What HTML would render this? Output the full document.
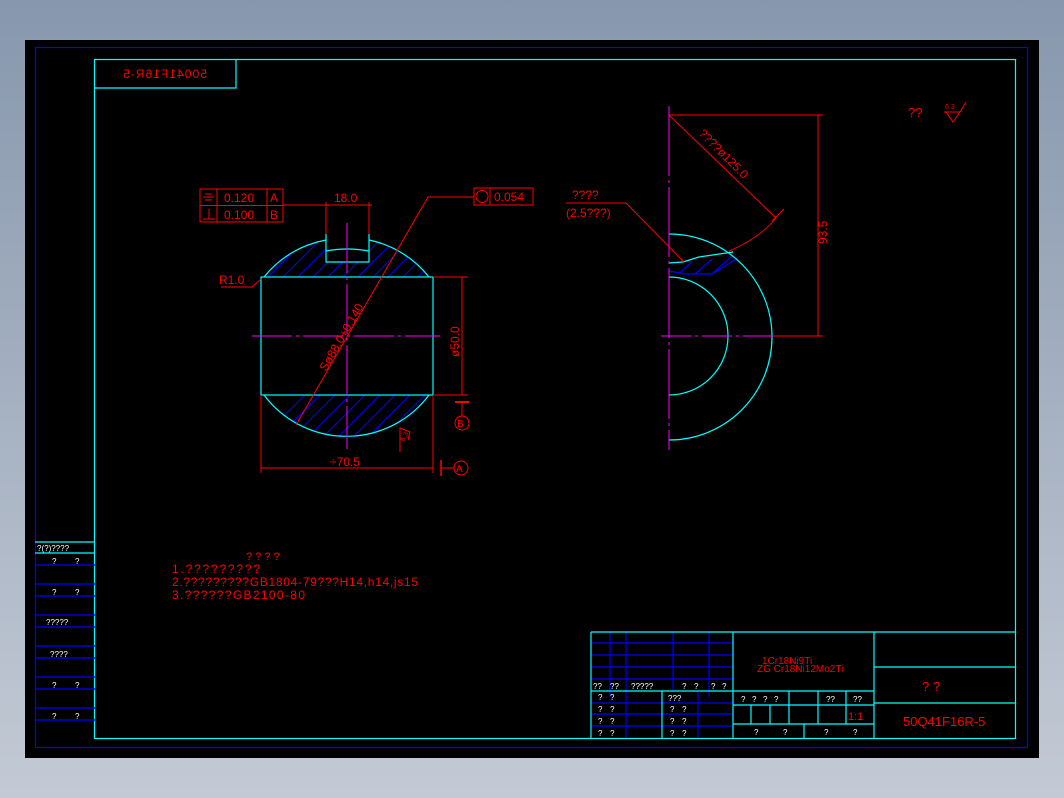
<!DOCTYPE html>
<html><head><meta charset="utf-8"><style>
html,body{margin:0;padding:0;}
body{width:1064px;height:798px;background:linear-gradient(#8797ad,#c3cad5);overflow:hidden;}
svg{display:block;}
text{font-family:"Liberation Sans",sans-serif;}
</style></head><body>
<svg width="1064" height="798" viewBox="0 0 1064 798" xmlns="http://www.w3.org/2000/svg">
<rect x="25" y="40" width="1014" height="718" fill="#000"/>
<g fill="none" stroke-width="1.2">
<rect x="35.5" y="47.5" width="992" height="700" stroke="#0000ff"/>
<rect x="94.5" y="59.5" width="921" height="679" stroke="#00ffff"/>
<polyline points="95,88 236,88 236,60" stroke="#00ffff"/>
<line x1="35" y1="542" x2="95" y2="542" stroke="#00ffff"/>
<line x1="35" y1="553" x2="95" y2="553" stroke="#00ffff"/>
<g stroke="#0000ff">
<line x1="35" y1="565" x2="95" y2="565"/><line x1="35" y1="584" x2="95" y2="584"/>
<line x1="35" y1="596" x2="95" y2="596"/><line x1="35" y1="615" x2="95" y2="615"/>
<line x1="35" y1="627" x2="95" y2="627"/><line x1="35" y1="646" x2="95" y2="646"/>
<line x1="35" y1="658" x2="95" y2="658"/><line x1="35" y1="677" x2="95" y2="677"/>
<line x1="35" y1="689" x2="95" y2="689"/><line x1="35" y1="708" x2="95" y2="708"/>
<line x1="35" y1="720" x2="95" y2="720"/>
</g>
<g stroke="#0000ff">
<line x1="610" y1="632" x2="610" y2="697"/><line x1="626" y1="632" x2="626" y2="738"/>
<line x1="673" y1="632" x2="673" y2="691"/><line x1="709" y1="632" x2="709" y2="697"/>
<line x1="591" y1="643" x2="733" y2="643"/><line x1="591" y1="655" x2="733" y2="655"/>
<line x1="591" y1="667" x2="733" y2="667"/><line x1="591" y1="679" x2="733" y2="679"/>
<line x1="591" y1="703" x2="733" y2="703"/><line x1="591" y1="714" x2="733" y2="714"/>
<line x1="591" y1="726" x2="733" y2="726"/>
<line x1="698" y1="691" x2="698" y2="738"/>
</g>
<g stroke="#00ffff">
<line x1="591" y1="632" x2="1016" y2="632"/>
<line x1="591" y1="632" x2="591" y2="738"/>
<line x1="733" y1="632" x2="733" y2="738"/>
<line x1="874" y1="632" x2="874" y2="738"/>
<line x1="591" y1="691" x2="874" y2="691"/>
<line x1="662" y1="691" x2="662" y2="738"/>
<line x1="874" y1="667" x2="1016" y2="667"/>
<line x1="874" y1="703" x2="1016" y2="703"/>
<line x1="733" y1="705" x2="874" y2="705"/>
<line x1="733" y1="724" x2="874" y2="724"/>
<line x1="789" y1="691" x2="789" y2="724"/>
<line x1="818" y1="691" x2="818" y2="724"/>
<line x1="846" y1="691" x2="846" y2="724"/>
<line x1="751" y1="705" x2="751" y2="724"/>
<line x1="770" y1="705" x2="770" y2="724"/>
<line x1="804" y1="724" x2="804" y2="738"/>
</g>
</g>

<g fill="none">
<clipPath id="ct"><path d="M264,277 A103,103 0 0 1 326,240 L326,262 L369,262 L369,240 A103,103 0 0 1 429,277 Z"/></clipPath>
<clipPath id="cb"><path d="M264,395 A103,103 0 0 0 429,395 Z"/></clipPath>
<g stroke="#0000ff" stroke-width="1" clip-path="url(#ct)">
<line x1="270" y1="290" x2="330" y2="230"/><line x1="285" y1="290" x2="345" y2="230"/>
<line x1="300" y1="290" x2="360" y2="230"/><line x1="315" y1="290" x2="375" y2="230"/>
<line x1="330" y1="290" x2="390" y2="230"/><line x1="345" y1="290" x2="405" y2="230"/>
<line x1="360" y1="290" x2="420" y2="230"/><line x1="375" y1="290" x2="435" y2="230"/>
<line x1="390" y1="290" x2="450" y2="230"/><line x1="405" y1="290" x2="465" y2="230"/>
<line x1="255" y1="290" x2="315" y2="230"/>
</g>
<g stroke="#0000ff" stroke-width="1" clip-path="url(#cb)">
<line x1="240" y1="460" x2="320" y2="380"/><line x1="255" y1="460" x2="335" y2="380"/>
<line x1="270" y1="460" x2="350" y2="380"/><line x1="285" y1="460" x2="365" y2="380"/>
<line x1="300" y1="460" x2="380" y2="380"/><line x1="315" y1="460" x2="395" y2="380"/>
<line x1="330" y1="460" x2="410" y2="380"/><line x1="345" y1="460" x2="425" y2="380"/>
<line x1="360" y1="460" x2="440" y2="380"/><line x1="375" y1="460" x2="455" y2="380"/>
<line x1="390" y1="460" x2="470" y2="380"/>
</g>
<g stroke="#00ffff" stroke-width="1.2">
<path d="M264,277 A103,103 0 0 1 326,240"/>
<path d="M369,240 A103,103 0 0 1 429,277"/>
<path d="M264,395 A103,103 0 0 0 429,395"/>
<rect x="261" y="277" width="172" height="118"/>
<polyline points="326,234 326,262 369,262 369,234"/>
<path d="M326,251 Q347,247 369,251"/>
</g>
<g stroke="#ff00ff" stroke-width="1">
<line x1="252" y1="336" x2="440" y2="336" stroke-dasharray="40,4,3,4"/>
<line x1="347" y1="223" x2="347" y2="449" stroke-dasharray="50,4,3,4"/>
</g>
<g stroke="#ff0000" stroke-width="1">
<rect x="200" y="189" width="83" height="33"/>
<line x1="200" y1="205.5" x2="283" y2="205.5"/>
<line x1="217" y1="189" x2="217" y2="222"/><line x1="267" y1="189" x2="267" y2="222"/>
<line x1="203" y1="197" x2="214" y2="197"/><line x1="205" y1="194" x2="212" y2="194"/><line x1="205" y1="200" x2="212" y2="200"/>
<line x1="203" y1="219" x2="215" y2="219"/><line x1="209" y1="209" x2="209" y2="219"/>
<line x1="283" y1="205" x2="327" y2="205"/>
<line x1="326" y1="202" x2="326" y2="234"/><line x1="369" y1="202" x2="369" y2="234"/>
<line x1="318" y1="205" x2="372" y2="205"/>
<rect x="474" y="188" width="59" height="17"/>
<line x1="490" y1="188" x2="490" y2="205"/>
<circle cx="482" cy="196.5" r="6"/>
<polyline points="474,197 428,197 296,425"/>
<polyline points="221,287 252,287 261,279"/>
<line x1="433" y1="277" x2="468" y2="277"/><line x1="433" y1="395" x2="468" y2="395"/>
<line x1="462" y1="277" x2="462" y2="395"/>
<line x1="455" y1="402" x2="469" y2="402" stroke-width="2"/>
<line x1="462" y1="402" x2="462" y2="416"/>
<circle cx="462" cy="423" r="7"/>
<line x1="261" y1="395" x2="261" y2="473"/><line x1="433" y1="395" x2="433" y2="473"/>
<line x1="261" y1="468" x2="433" y2="468"/>
<line x1="441" y1="460" x2="441" y2="476" stroke-width="1.5"/>
<line x1="441" y1="468" x2="454" y2="468"/>
<circle cx="461" cy="468" r="7"/>
<polyline points="400,452 400,428 410,432 408,440"/>
</g>
</g>

<g fill="none">
<g stroke="#0000ff" stroke-width="1.2">
<polyline points="669,271 685,274 712,274 738,258"/>
<line x1="680" y1="273" x2="692" y2="262"/><line x1="695" y1="274" x2="712" y2="259"/>
<line x1="712" y1="274" x2="731" y2="257"/>
</g>
<g stroke="#00ffff" stroke-width="1.2">
<path d="M669,234 A103,103 0 0 1 669,440"/>
<path d="M669,277 A59,59 0 0 1 669,395"/>
<polyline points="669,263 683,262 699,257 733,252"/>
</g>
<g stroke="#ff00ff" stroke-width="1">
<line x1="669" y1="106" x2="669" y2="450" stroke-dasharray="70,4,3,4"/>
<line x1="661" y1="336" x2="773" y2="336" stroke-dasharray="30,4,3,4"/>
</g>
<g stroke="#ff0000" stroke-width="1">
<line x1="669" y1="115" x2="823" y2="115"/>
<line x1="773" y1="336" x2="823" y2="336"/>
<line x1="818" y1="115" x2="818" y2="336"/>
<line x1="669" y1="115" x2="776" y2="218"/>
<line x1="772" y1="221" x2="784" y2="209"/>
<path d="M729,251 Q760,238 776,218"/>
<polyline points="566,203 626,203 684,262"/>
</g>
</g>
<g stroke="#ff0000" fill="none" stroke-width="1">
<line x1="944" y1="112" x2="960" y2="112"/>
<polyline points="946,112 953,122 960,112 966,102"/>
</g>

<g fill="#ff0000" font-size="12">
<text x="165" y="78" text-anchor="middle" transform="translate(330,0) scale(-1,1)" textLength="84">50041F16R-5</text>
<text x="224" y="202">0.120</text><text x="270" y="202">A</text>
<text x="224" y="219">0.100</text><text x="270" y="219">B</text>
<text x="334" y="202">18.0</text>
<text x="494" y="201">0.054</text>
<text x="219" y="284">R1.0</text>
<text x="330" y="466">÷70.5</text>
<text x="457" y="427" font-size="10">B</text>
<text x="456" y="472" font-size="10">A</text>
<text transform="translate(459,357) rotate(-90)">ø50.0</text>
<text transform="translate(326,372) rotate(-60)">Sø88.0+0.140</text>
<text transform="translate(404,442) rotate(-60)" font-size="7">6.3</text>
<text transform="translate(698,134) rotate(45)">????ø125.0</text>
<text transform="translate(827,244) rotate(-90)">93.5</text>
<text x="572" y="199">????</text>
<text x="566" y="217">(2.5???)</text>
<text x="908" y="117" font-size="13">??</text>
<text x="945" y="109" font-size="7">6.3</text>
<text x="246" y="560" font-size="11">?  ?  ?  ?</text>
<text x="172" y="573" textLength="88">1.?????????</text>
<text x="172" y="586" textLength="246">2.?????????GB1804-79???H14,h14,js15</text>
<text x="172" y="599" textLength="133">3.??????GB2100-80</text>
<text x="762" y="664" font-size="10">1Cr18Ni9Ti</text>
<text x="757" y="672" font-size="10">ZG  Cr18Ni12Mo2Ti</text>
<text x="922" y="691" font-size="13">?    ?</text>
<text x="903" y="726" font-size="13">50Q41F16R-5</text>
<text x="848" y="720" font-size="11">1:1</text>
</g>
<g fill="#ffffff" font-size="8">
<text x="37" y="551">?(?)????</text>
<text x="52" y="564">?</text><text x="75" y="564">?</text>
<text x="52" y="595">?</text><text x="75" y="595">?</text>
<text x="46" y="625">?????</text>
<text x="50" y="657">????</text>
<text x="52" y="688">?</text><text x="75" y="688">?</text>
<text x="52" y="719">?</text><text x="75" y="719">?</text>
<text x="593" y="689">??</text><text x="610" y="689">??</text><text x="631" y="689">?????</text>
<text x="682" y="689">?</text><text x="694" y="689">?</text><text x="711" y="689">?</text><text x="722" y="689">?</text>
<text x="598" y="700">?</text><text x="610" y="700">?</text>
<text x="598" y="712">?</text><text x="610" y="712">?</text>
<text x="598" y="724">?</text><text x="610" y="724">?</text>
<text x="598" y="736">?</text><text x="610" y="736">?</text>
<text x="668" y="701">???</text>
<text x="670" y="712">?</text><text x="682" y="712">?</text>
<text x="670" y="724">?</text><text x="682" y="724">?</text>
<text x="670" y="736">?</text><text x="682" y="736">?</text>
<text x="741" y="702">?</text><text x="752" y="702">?</text><text x="763" y="702">?</text><text x="774" y="702">?</text>
<text x="826" y="702">??</text><text x="853" y="702">??</text>
<text x="754" y="735">?</text><text x="783" y="735">?</text><text x="824" y="735">?</text><text x="853" y="735">?</text>
</g>
</svg>
</body></html>
